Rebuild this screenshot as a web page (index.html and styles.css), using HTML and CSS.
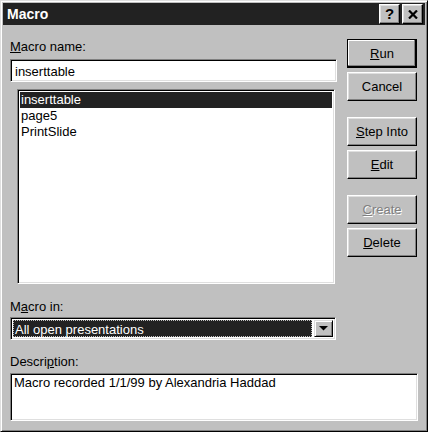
FILE: index.html
```html
<!DOCTYPE html>
<html lang="en">

<head>
    <meta charset="UTF-8">
    <title>Macro</title>
    <link rel="stylesheet" href="styles.css">
</head>

<body>
    <div class="window">
        <div class="titlebar">
            <span class="title">Macro</span>
            <button class="tbtn help">?</button>
            <button class="tbtn close">
                <svg width="10" height="9" viewBox="0 0 10 9"><path d="M1 0.5 L9 8.5 M9 0.5 L1 8.5" stroke="#000" stroke-width="2.2" fill="none"/></svg>
            </button>
        </div>
        <div class="content">
            <div class="row">
                <div class="left">
                    <div class="label"><u>M</u>acro name:</div>
                    <div class="field sunken">inserttable</div>
                    <div class="list sunken">
                        <div class="item selected">inserttable</div>
                        <div class="item">page5</div>
                        <div class="item">PrintSlide</div>
                    </div>
                    <div class="label macro-in">M<u>a</u>cro in:</div>
                    <div class="combo sunken">
                        <div class="combo-value">All open presentations</div>
                        <div class="combo-btn">
                            <svg width="9" height="5" viewBox="0 0 9 5"><path d="M0 0 H9 L4.5 4.5 Z" fill="#000"/></svg>
                        </div>
                    </div>
                </div>
                <div class="buttons">
                    <button class="button default"><u>R</u>un</button>
                    <button class="button">Cancel</button>
                    <button class="button group"><u>S</u>tep Into</button>
                    <button class="button"><u>E</u>dit</button>
                    <button class="button group disabled"><u>C</u>reate</button>
                    <button class="button"><u>D</u>elete</button>
                </div>
            </div>
            <div class="label desc-label">Descri<u>p</u>tion:</div>
            <div class="desc sunken">Macro recorded 1/1/99 by Alexandria Haddad</div>
        </div>
    </div>
</body>

</html>
```

FILE: styles.css
```css
body {
    margin: 0;
    font-family: "Liberation Sans", Arial, sans-serif;
    font-size: 13px;
    color: #000;
    background: #c0c0c0;
}
.window {
    width: 428px;
    height: 432px;
    box-sizing: border-box;
    background: #c0c0c0;
    border: 1px solid;
    border-color: #dfdfdf #000 #000 #dfdfdf;
    box-shadow: inset 1px 1px #fff, inset -1px -1px #808080;
    padding: 2px;
}
.titlebar {
    height: 22px;
    background: #222;
    display: flex;
    align-items: center;
    padding: 0 2px 0 4px;
    gap: 2px;
}
.title {
    flex: 1;
    color: #fff;
    font-weight: bold;
    font-size: 14px;
}
.tbtn {
    width: 21px;
    height: 20px;
    padding: 0;
    background: #c0c0c0;
    border: 1px solid;
    border-color: #fff #000 #000 #fff;
    box-shadow: inset -1px -1px #808080, inset 1px 1px #dfdfdf;
    font-family: "Liberation Sans", Arial, sans-serif;
    font-weight: bold;
    font-size: 15px;
    line-height: 16px;
    display: flex;
    align-items: center;
    justify-content: center;
}
.sunken {
    border: 1px solid;
    border-color: #808080 #fff #fff #808080;
    box-shadow: inset 1px 1px #000, inset -1px -1px #dfdfdf;
    background: #fff;
}
.content {
    padding: 0 7px;
}
.row {
    display: flex;
    justify-content: space-between;
    align-items: flex-start;
}
.left {
    width: 327px;
    padding-top: 15px;
}
.label {
    line-height: 14px;
    height: 14px;
}
.label u, .button u {
    text-decoration-thickness: 1px;
    text-underline-offset: 1px;
}
.field {
    margin-top: 5px;
    height: 23px;
    box-sizing: border-box;
    padding: 2px 4px;
    line-height: 19px;
}
.list {
    margin: 7px 2px 0 7px;
    height: 195px;
    box-sizing: border-box;
    padding: 2px;
}
.item {
    height: 16px;
    line-height: 16px;
    padding-left: 1px;
}
.item.selected {
    background: #222;
    color: #fff;
}
.macro-in {
    margin-top: 16px;
}
.combo {
    margin-top: 3px;
    width: 326px;
    height: 23px;
    box-sizing: border-box;
    padding: 2px;
    display: flex;
}
.combo-value {
    flex: 1;
    margin-right: 2px;
    background: #222;
    color: #fff;
    border: 1px dotted #c0c0c0;
    line-height: 17px;
    padding-left: 1px;
}
.combo-btn {
    width: 19px;
    box-sizing: border-box;
    background: #c0c0c0;
    border: 1px solid;
    border-color: #dfdfdf #000 #000 #dfdfdf;
    box-shadow: inset 1px 1px #fff, inset -1px -1px #808080;
    display: flex;
    align-items: center;
    justify-content: center;
}
.buttons {
    width: 70px;
    padding-top: 14px;
    margin-right: 1px;
    display: flex;
    flex-direction: column;
    gap: 4px;
}
.button {
    height: 29px;
    padding: 0;
    background: #c0c0c0;
    border: 1px solid;
    border-color: #fff #000 #000 #fff;
    box-shadow: inset -1px -1px #808080, inset 1px 1px #dfdfdf;
    font-family: "Liberation Sans", Arial, sans-serif;
    font-size: 13px;
    color: #000;
}
.button.default {
    border-color: #000;
    box-shadow: inset -1px -1px #000, inset -2px -2px #808080, inset 1px 1px #fff;
}
.button.group {
    margin-top: 12px;
}
.button.disabled {
    color: #808080;
    text-shadow: 1px 1px #fff;
}
.desc-label {
    margin-top: 15px;
}
.desc {
    margin-top: 4px;
    height: 48px;
    box-sizing: border-box;
    padding: 1px 3px;
    line-height: 15px;
}
```
